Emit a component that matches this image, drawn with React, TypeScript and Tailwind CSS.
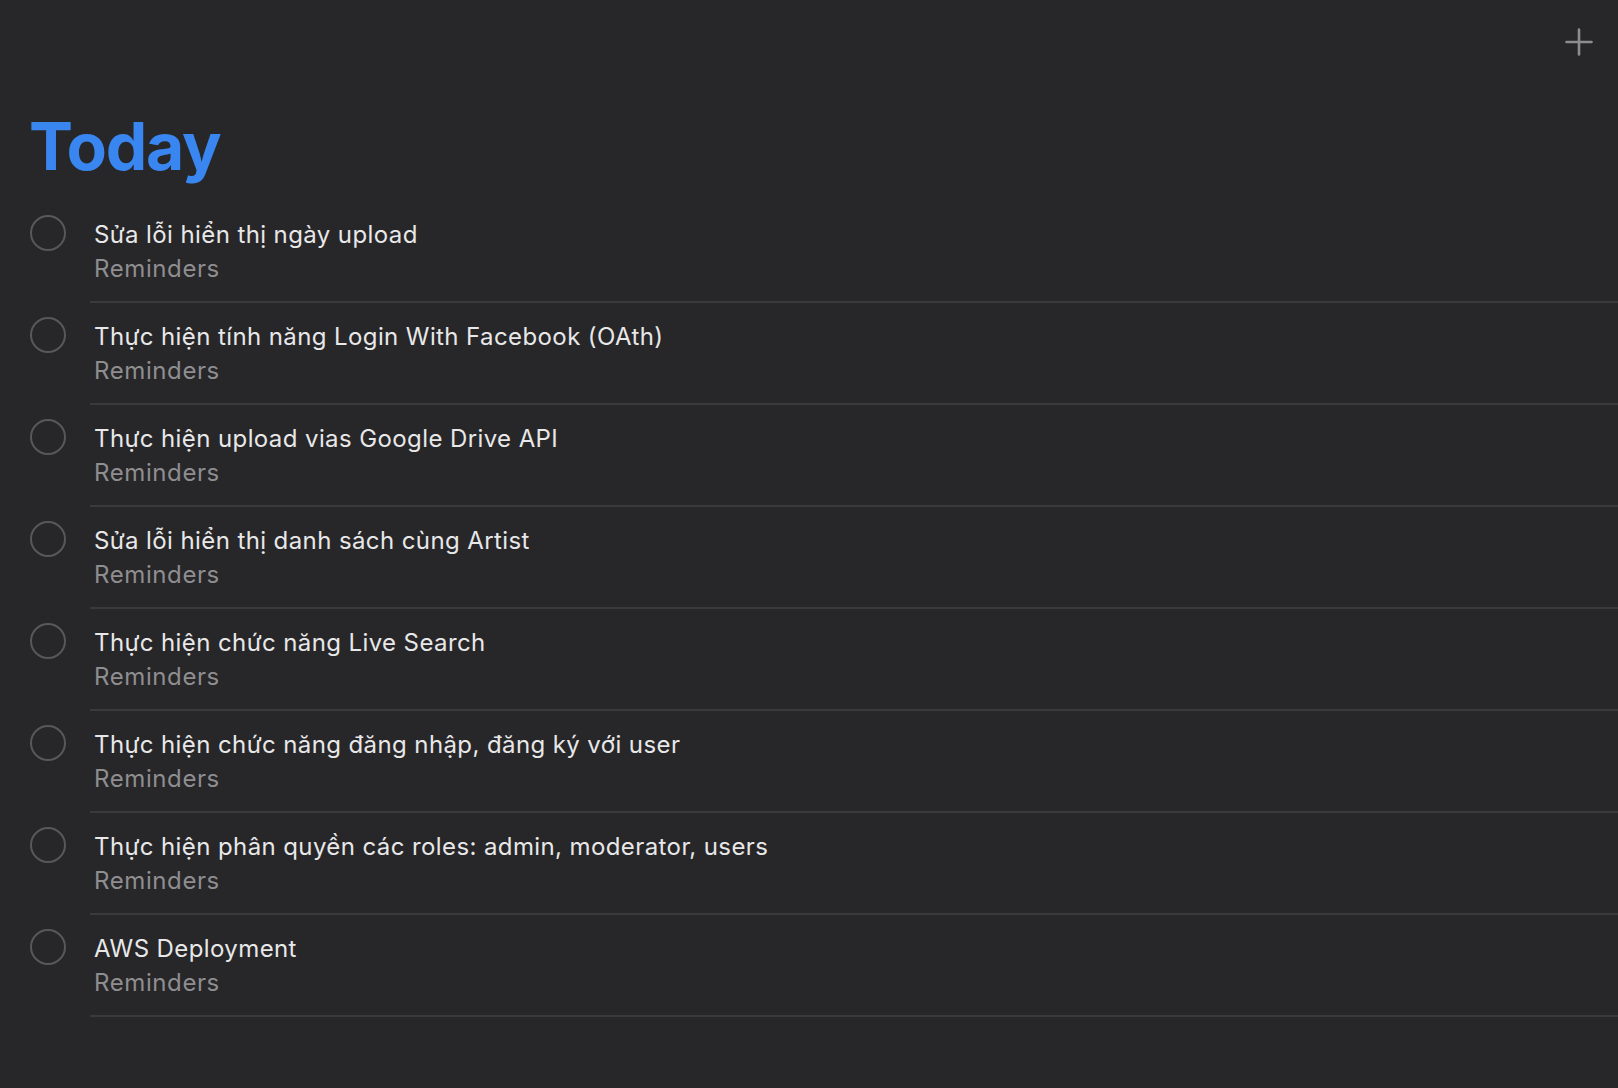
import React from "react";

const items = [
  "Sửa lỗi hiển thị ngày upload",
  "Thực hiện tính năng Login With Facebook (OAth)",
  "Thực hiện upload vias Google Drive API",
  "Sửa lỗi hiển thị danh sách cùng Artist",
  "Thực hiện chức năng Live Search",
  "Thực hiện chức năng đăng nhập, đăng ký với user",
  "Thực hiện phân quyền các roles: admin, moderator, users",
  "AWS Deployment",
];

export default function App() {
  return (
    <div
      className="min-h-[1088px] w-full bg-[#272628] text-[#e6e6e7]"
      style={{ fontFamily: "Inter, 'Noto Sans', sans-serif" }}
    >
      <div className="flex h-[113px] justify-end pr-[25px] pt-[28px]">
        <svg width="28" height="28" viewBox="0 0 28 28" className="text-[#8d8d8f]">
          <path d="M14 1.5v25M1.5 14h25" stroke="currentColor" strokeWidth="2.6" strokeLinecap="round" />
        </svg>
      </div>
      <h1 className="pl-[29px] text-[66px] font-bold leading-[66px] tracking-[-1.3px] text-[#3a86f0]">
        Today
      </h1>
      <div className="mt-[22px] flex flex-col">
        {items.map((t) => (
          <div key={t} className="flex">
            <div className="w-[90px] shrink-0 pl-[30px] pt-[14px]">
              <div className="h-[36px] w-[36px] rounded-full border-[2px] border-[#58585a]" />
            </div>
            <div className="flex-1 border-b-[2px] border-[#3a393c] pb-[15px] pl-[4px] pt-[17px]">
              <div className="text-[24px] leading-[34px] tracking-[0.4px] text-[#e8e8e9]">{t}</div>
              <div className="text-[24px] leading-[34px] tracking-[0.6px] text-[#8e8e90]">Reminders</div>
            </div>
          </div>
        ))}
      </div>
    </div>
  );
}
